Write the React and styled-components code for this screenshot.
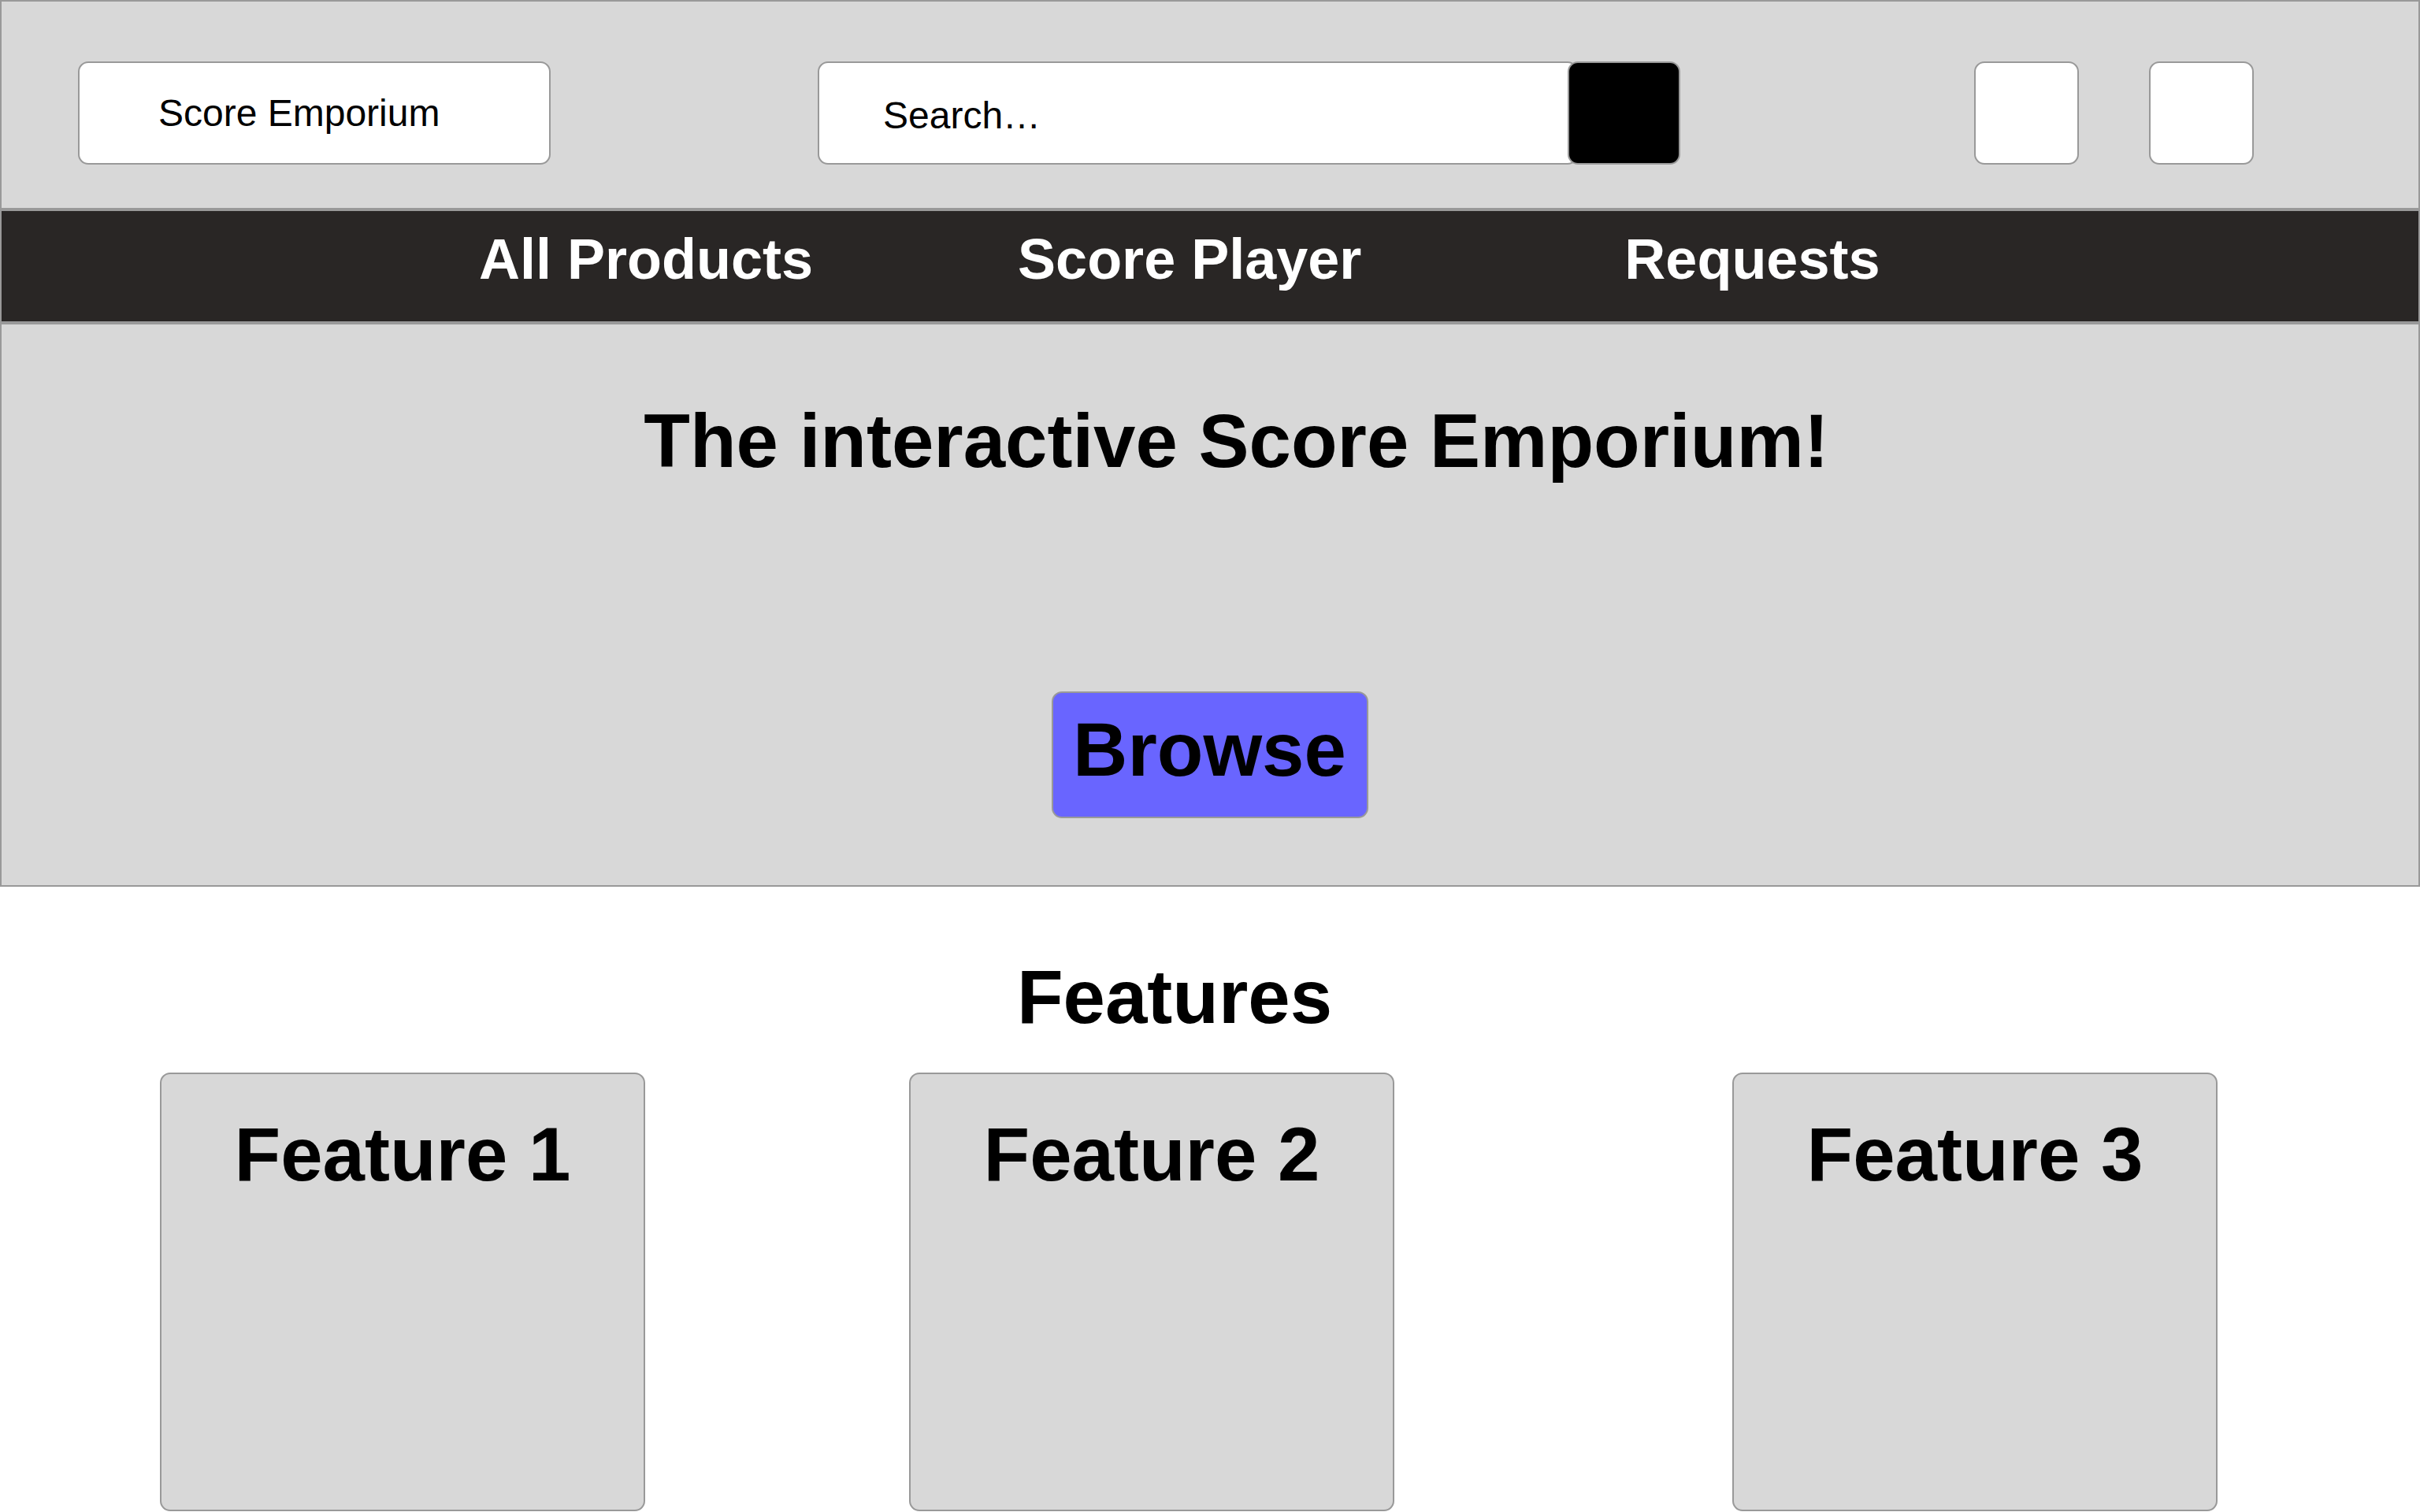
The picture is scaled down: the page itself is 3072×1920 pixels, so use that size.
import React from 'react'
import styled, { createGlobalStyle } from 'styled-components'

const GlobalStyle = createGlobalStyle`
  html, body {
    margin: 0;
    padding: 0;
    overflow: hidden;
    background: #ffffff;
    font-family: "Liberation Sans", Arial, Helvetica, sans-serif;
  }
  * {
    box-sizing: border-box;
  }
`

const Page = styled.div`
  width: 3072px;
  height: 1920px;
  display: flex;
  flex-direction: column;
`

const Header = styled.header`
  display: flex;
  align-items: center;
  padding: 76px 0 55px 97px;
  background: #d8d8d8;
  border: 2px solid #999999;
`

const LogoBox = styled.div`
  width: 600px;
  height: 131px;
  display: flex;
  align-items: center;
  padding-left: 100px;
  background: #ffffff;
  border: 2px solid #999999;
  border-radius: 13px;
  font-size: 48px;
  color: #000000;
`

const SearchWrap = styled.form`
  display: flex;
  width: 1095px;
  height: 131px;
  margin-left: 339px;
`

const SearchInput = styled.input`
  flex: 1;
  height: 100%;
  padding: 6px 0 0 81px;
  border: 2px solid #999999;
  border-radius: 13px;
  background: #ffffff;
  font-family: inherit;
  font-size: 48px;
  color: #000000;
  outline: none;

  &::placeholder {
    color: #000000;
    opacity: 1;
  }
`

const SearchButton = styled.button`
  width: 143px;
  height: 100%;
  margin-left: -13px;
  background: #000000;
  border: 2px solid #999999;
  border-radius: 13px;
`

const IconBox = styled.div`
  width: 133px;
  height: 131px;
  margin-left: ${p => p.$gap}px;
  background: #ffffff;
  border: 2px solid #999999;
  border-radius: 13px;
`

const Nav = styled.nav`
  display: flex;
  height: 144px;
  padding: 25px 0 0 606px;
  background: #292625;
  border: 2px solid #999999;
`

const NavLink = styled.a`
  margin-left: ${p => p.$gap || 0}px;
  font-size: 72px;
  line-height: 72px;
  font-weight: bold;
  color: #ffffff;
  text-decoration: none;
  white-space: nowrap;
`

const Hero = styled.section`
  display: flex;
  flex-direction: column;
  align-items: center;
  padding: 100px 0 85px;
  background: #d8d8d8;
  border: 2px solid #999999;
`

const HeroTitle = styled.h1`
  align-self: stretch;
  margin: 0;
  padding-left: 67px;
  text-align: center;
  font-size: 96px;
  line-height: 96px;
  font-weight: bold;
  color: #000000;
  white-space: nowrap;
`

const BrowseButton = styled.button`
  margin-top: 270px;
  padding: 24px 26px 37px 25px;
  background: #6965ff;
  border: 2px solid #999999;
  border-radius: 13px;
  font-family: inherit;
  font-size: 96px;
  line-height: 96px;
  font-weight: bold;
  color: #000000;
`

const FeaturesTitle = styled.h2`
  margin: 92px 0 48px;
  padding-right: 90px;
  text-align: center;
  font-size: 96px;
  line-height: 96px;
  font-weight: bold;
  color: #000000;
`

const CardRow = styled.div`
  display: flex;
`

const FeatureCard = styled.div`
  width: 616px;
  height: 557px;
  margin-left: ${p => p.$gap}px;
  padding-top: 54px;
  background: #d8d8d8;
  border: 2px solid #999999;
  border-radius: 13px;
  text-align: center;
  font-size: 96px;
  line-height: 96px;
  font-weight: bold;
  color: #000000;
  white-space: nowrap;
`

const links = [
  { label: 'All Products', gap: 0 },
  { label: 'Score Player', gap: 260 },
  { label: 'Requests', gap: 334 },
]

const features = [
  { title: 'Feature 1', gap: 203 },
  { title: 'Feature 2', gap: 335 },
  { title: 'Feature 3', gap: 429 },
]

export default function App() {
  return (
    <Page>
      <GlobalStyle />
      <Header>
        <LogoBox>Score Emporium</LogoBox>
        <SearchWrap onSubmit={e => e.preventDefault()}>
          <SearchInput placeholder="Search…" />
          <SearchButton type="submit" aria-label="Search" />
        </SearchWrap>
        <IconBox $gap={373} />
        <IconBox $gap={89} />
      </Header>
      <Nav>
        {links.map(link => (
          <NavLink key={link.label} href="#" $gap={link.gap}>
            {link.label}
          </NavLink>
        ))}
      </Nav>
      <Hero>
        <HeroTitle>The interactive Score Emporium!</HeroTitle>
        <BrowseButton>Browse</BrowseButton>
      </Hero>
      <FeaturesTitle>Features</FeaturesTitle>
      <CardRow>
        {features.map(f => (
          <FeatureCard key={f.title} $gap={f.gap}>
            {f.title}
          </FeatureCard>
        ))}
      </CardRow>
    </Page>
  )
}
